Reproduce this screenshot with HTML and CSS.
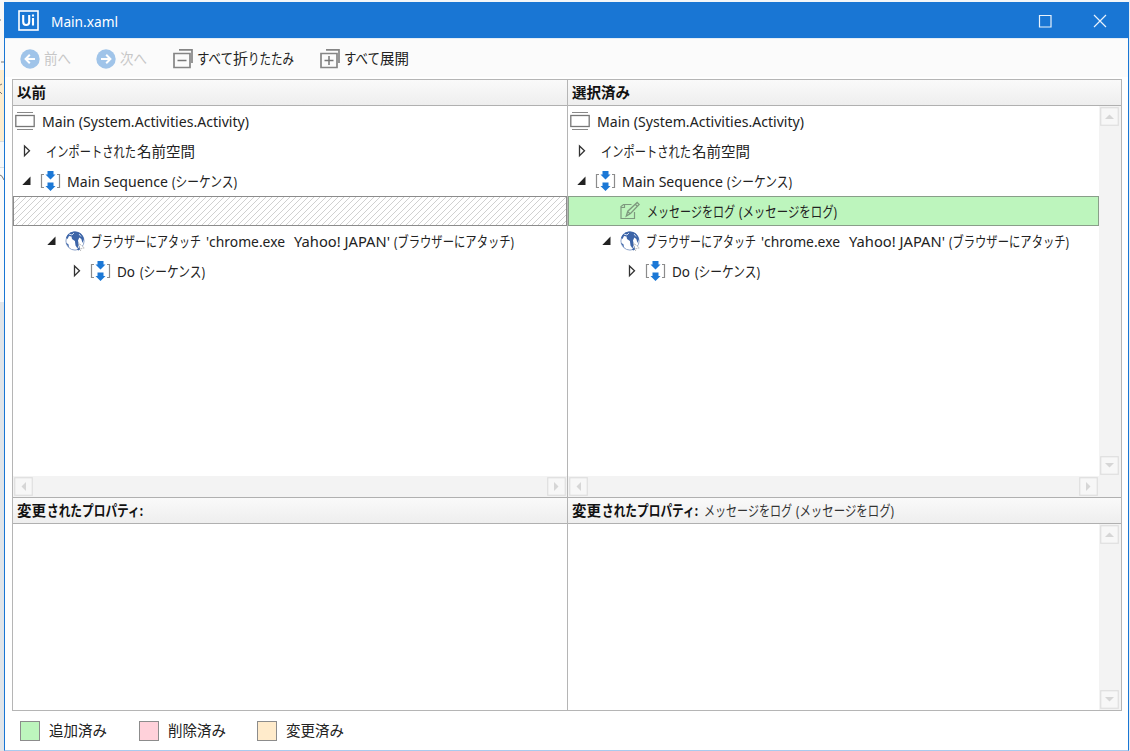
FILE: index.html
```html
<!DOCTYPE html>
<html lang="ja">
<head>
<meta charset="utf-8">
<title>Main.xaml</title>
<link rel="stylesheet" href="styles.css">
</head>
<body>
<svg class="defs" width="0" height="0">
  <defs>
    <symbol id="back" viewBox="0 0 20 20"><circle cx="10" cy="10" r="9.7" fill="#a0c4e9"/><path d="M15 10H6M9.8 5.8L5.6 10l4.2 4.2" fill="none" stroke="#fff" stroke-width="2"/></symbol>
    <symbol id="stack" viewBox="0 0 20 20"><path d="M1 4.500h16v14H1zM6 .8h13v13.200" fill="none" stroke="#858585" stroke-width="1.700"/><path d="M4.500 11.500h9" stroke="#777" stroke-width="1.500"/></symbol>
    <symbol id="activity" viewBox="0 0 20 20"><path d="M2 1.500h16M2 18.500h16" stroke="#888" stroke-width="1.200"/><rect x=".8" y="4.500" width="18.400" height="11" fill="#fff" stroke="#777" stroke-width="1.300"/></symbol>
    <symbol id="closed" viewBox="0 0 10 14"><path d="M2.500 2l5 4.800-5 4.800z" fill="#fff" stroke="#333" stroke-width="1.300"/></symbol>
    <symbol id="open" viewBox="0 0 10 10"><path d="M8.500 .5v8.500H.3z" fill="#222"/></symbol>
    <symbol id="sequence" viewBox="0 0 22 20"><path d="M4 3.500H1.500v13H4M17 3.500h2.500v13H17" fill="none" stroke="#8c8c8c" stroke-width="1.200"/><path d="M7.500 0h6v3.500h2L10.500 8.500 5.500 3.500h2zM7.500 11.500h6V15h2l-5 5-5-5h2z" fill="#1c78d6"/></symbol>
    <symbol id="globe" viewBox="0 0 20 20"><circle cx="10" cy="10" r="9.100" fill="#fff" stroke="#8fa5cb" stroke-width="1"/><path d="M1 7C2.500 2.500 6 .5 10 .5c4.500 0 8.200 3 9 7.500l-1.500 4-1.200-4-2-1.500-1.300 3 .8 4.500-1.300 3.500-2-3-.6-4.500L7 8 6.500 5.500 4 5 2.500 8zM12 18.500l2.500-3 1 2.500-2 1.500zM.8 12l2.500 1 1 4z" fill="#3d65a8"/><path d="M4 3l3 1 2-2M14 3l2 2.500" fill="none" stroke="#cfdcef" stroke-width="1"/><path d="M13.500 12l6 5-2.800.2-1.200 2.400z" fill="#fff" stroke="#a5a5a5" stroke-width=".8" stroke-dasharray="1.300 .8"/></symbol>
    <symbol id="note" viewBox="0 0 20 20"><path d="M14.500 11v6.500H1V5.500L3.500 3.500h8M1 6.500h3.500v-3" fill="none" stroke="#7e987e" stroke-width="1.200"/><path d="M17.200 1.500l2 2L10.500 12.500l-4.200 2.500 1.500-4.800zM8 11l2.200 1.800M15.500 3.500l2 2" fill="none" stroke="#7e987e" stroke-width="1.300"/></symbol>
    <symbol id="up" viewBox="0 0 19 19"><rect x=".75" y=".75" width="17.500" height="17.500" fill="#f7f7f7" stroke="#dedede" stroke-width="1.200"/><path d="M5 12l4.500-4.500L14 12z" fill="#d6d6d6"/></symbol>
    <pattern id="hatch" width="6" height="6" patternUnits="userSpaceOnUse"><path d="M-1 7L7-1M-1 1l2-2M5 7l2-2" stroke="#c4c4c4" stroke-width=".8"/></pattern>
  </defs>
</svg>
<div class="desktop">
  <div class="behind">
    <span class="strip strip-top"></span><span class="strip strip-cream"></span><span class="strip strip-gap"></span><span class="strip strip-mid"></span><span class="strip strip-low"></span>
    <svg class="scraps" width="5" height="751"><path d="M0 20h1M1 62h3M0 85l2-1M0 92l2 2M0 175q2 0 4 5" fill="none" stroke="#777"/><path d="M0 141.500h5M0 167.500h5" stroke="#d6dde2"/></svg>
  </div>
  <div class="window">
    <header class="titlebar">
      <svg class="logo" width="21" height="21"><rect x="1" y="1" width="19" height="19" fill="none" stroke="#fff" stroke-width="1.600"/><path d="M5.200 5v6.700q0 3.300 3 3.300t3-3.300V5M15 8v7.500M15 4.500v2" fill="none" stroke="#fff" stroke-width="2.100"/></svg>
      <svg class="title" width="69" height="22"><text x="0" y="17" textLength="67" lengthAdjust="spacingAndGlyphs">Main.xaml</text></svg>
      <svg class="controls" width="72" height="14"><path d="M1.500 1.500h11.500v11.500H1.500zM56 1l12 12M68 1L56 13" fill="none" stroke="#e8f2fc" stroke-width="1.200"/></svg>
    </header>
    <nav class="toolbar">
      <div class="tool off prev"><svg width="20" height="20"><use href="#back"/></svg><svg class="text" width="28" height="22"><text y="16" textLength="27" lengthAdjust="spacingAndGlyphs">前へ</text></svg></div>
      <div class="tool off next"><svg class="flip" width="20" height="20"><use href="#back"/></svg><svg class="text" width="28" height="22"><text y="16" textLength="27" lengthAdjust="spacingAndGlyphs">次へ</text></svg></div>
      <div class="tool collapse"><svg width="20" height="20"><use href="#stack"/></svg><svg class="text" width="99" height="22"><text y="16"><tspan x="0" textLength="36" lengthAdjust="spacingAndGlyphs">すべて</tspan><tspan x="36" textLength="15" lengthAdjust="spacingAndGlyphs">折</tspan><tspan x="51" textLength="46" lengthAdjust="spacingAndGlyphs">りたたみ</tspan></text></svg></div>
      <div class="tool"><svg width="20" height="20"><use href="#stack"/><path d="M9 7v9" stroke="#777" stroke-width="1.500"/></svg><svg class="text" width="67" height="22"><text y="16"><tspan x="0" textLength="36" lengthAdjust="spacingAndGlyphs">すべて</tspan><tspan x="36" textLength="29" lengthAdjust="spacingAndGlyphs">展開</tspan></text></svg></div>
    </nav>
    <main class="grid">
      <section class="pane">
        <h2 class="head"><svg class="text" width="60" height="22"><text y="16" textLength="29" lengthAdjust="spacingAndGlyphs">以前</text></svg></h2>
        <div class="tree">
          <div class="row"><svg class="root-icon" width="20" height="20"><use href="#activity"/></svg><svg class="text" width="210" height="22"><text y="16" textLength="207" lengthAdjust="spacingAndGlyphs">Main (System.Activities.Activity)</text></svg></div>
          <div class="row l1"><svg class="arrow" width="10" height="14"><use href="#closed"/></svg><svg class="text names" width="151" height="22"><text y="16"><tspan x="0" textLength="90" lengthAdjust="spacingAndGlyphs">インポートされた</tspan><tspan x="91" textLength="58" lengthAdjust="spacingAndGlyphs">名前空間</tspan></text></svg></div>
          <div class="row l1"><svg class="arrow" width="10" height="10"><use href="#open"/></svg><svg class="seq" width="22" height="20"><use href="#sequence"/></svg><svg class="text" width="173" height="22"><text y="16"><tspan x="0" textLength="101" lengthAdjust="spacingAndGlyphs">Main Sequence</tspan><tspan x="105" textLength="65" lengthAdjust="spacingAndGlyphs">(シーケンス)</tspan></text></svg></div>
          <div class="row missing"><svg width="552" height="28"><rect width="552" height="28" fill="url(#hatch)"/></svg></div>
          <div class="row l2"><svg class="arrow" width="10" height="10"><use href="#open"/></svg><svg class="globe" width="20" height="20"><use href="#globe"/></svg><svg class="text" width="425" height="22"><text y="16"><tspan x="0" textLength="110" lengthAdjust="spacingAndGlyphs">ブラウザーにアタッチ</tspan><tspan x="115" textLength="79" lengthAdjust="spacingAndGlyphs">'chrome.exe</tspan><tspan x="203" textLength="96" lengthAdjust="spacingAndGlyphs">Yahoo! JAPAN'</tspan><tspan x="303" textLength="120" lengthAdjust="spacingAndGlyphs">(ブラウザーにアタッチ)</tspan></text></svg></div>
          <div class="row l3"><svg class="arrow" width="10" height="14"><use href="#closed"/></svg><svg class="seq" width="22" height="20"><use href="#sequence"/></svg><svg class="text" width="91" height="22"><text y="16"><tspan x="0" textLength="18" lengthAdjust="spacingAndGlyphs">Do</tspan><tspan x="23" textLength="65" lengthAdjust="spacingAndGlyphs">(シーケンス)</tspan></text></svg></div>
        </div>
        <div class="hscroll"><svg class="turn-left" width="19" height="19"><use href="#up"/></svg><svg class="turn-right" width="19" height="19"><use href="#up"/></svg></div>
        <h2 class="head props"><svg class="text" width="140" height="22"><text y="16"><tspan x="0" textLength="29" lengthAdjust="spacingAndGlyphs">変更</tspan><tspan x="30" textLength="96" lengthAdjust="spacingAndGlyphs">されたプロパティ:</tspan></text></svg></h2>
        <div class="details"></div>
      </section>
      <section class="pane selected">
        <h2 class="head"><svg class="text" width="60" height="22"><text y="16" textLength="58" lengthAdjust="spacingAndGlyphs">選択済み</text></svg></h2>
        <div class="body">
          <div class="main-column">
            <div class="tree">
              <div class="row"><svg class="root-icon" width="20" height="20"><use href="#activity"/></svg><svg class="text" width="210" height="22"><text y="16" textLength="207" lengthAdjust="spacingAndGlyphs">Main (System.Activities.Activity)</text></svg></div>
              <div class="row l1"><svg class="arrow" width="10" height="14"><use href="#closed"/></svg><svg class="text names" width="151" height="22"><text y="16"><tspan x="0" textLength="90" lengthAdjust="spacingAndGlyphs">インポートされた</tspan><tspan x="91" textLength="58" lengthAdjust="spacingAndGlyphs">名前空間</tspan></text></svg></div>
              <div class="row l1"><svg class="arrow" width="10" height="10"><use href="#open"/></svg><svg class="seq" width="22" height="20"><use href="#sequence"/></svg><svg class="text" width="173" height="22"><text y="16"><tspan x="0" textLength="101" lengthAdjust="spacingAndGlyphs">Main Sequence</tspan><tspan x="105" textLength="65" lengthAdjust="spacingAndGlyphs">(シーケンス)</tspan></text></svg></div>
              <div class="row added"><svg class="note" width="20" height="20"><use href="#note"/></svg><svg class="text" width="193" height="22"><text y="16"><tspan x="0" textLength="88" lengthAdjust="spacingAndGlyphs">メッセージをログ</tspan><tspan x="92" textLength="98" lengthAdjust="spacingAndGlyphs">(メッセージをログ)</tspan></text></svg></div>
              <div class="row l2"><svg class="arrow" width="10" height="10"><use href="#open"/></svg><svg class="globe" width="20" height="20"><use href="#globe"/></svg><svg class="text" width="425" height="22"><text y="16"><tspan x="0" textLength="110" lengthAdjust="spacingAndGlyphs">ブラウザーにアタッチ</tspan><tspan x="115" textLength="79" lengthAdjust="spacingAndGlyphs">'chrome.exe</tspan><tspan x="203" textLength="96" lengthAdjust="spacingAndGlyphs">Yahoo! JAPAN'</tspan><tspan x="303" textLength="120" lengthAdjust="spacingAndGlyphs">(ブラウザーにアタッチ)</tspan></text></svg></div>
              <div class="row l3"><svg class="arrow" width="10" height="14"><use href="#closed"/></svg><svg class="seq" width="22" height="20"><use href="#sequence"/></svg><svg class="text" width="91" height="22"><text y="16"><tspan x="0" textLength="18" lengthAdjust="spacingAndGlyphs">Do</tspan><tspan x="23" textLength="65" lengthAdjust="spacingAndGlyphs">(シーケンス)</tspan></text></svg></div>
            </div>
            <div class="hscroll"><svg class="turn-left" width="19" height="19"><use href="#up"/></svg><svg class="turn-right" width="19" height="19"><use href="#up"/></svg></div>
          </div>
          <div class="vscroll upper"><svg width="19" height="19"><use href="#up"/></svg><svg class="turn-down" width="19" height="19"><use href="#up"/></svg></div>
        </div>
        <h2 class="head props"><svg class="text" width="330" height="22"><text y="16"><tspan x="0" textLength="29" lengthAdjust="spacingAndGlyphs">変更</tspan><tspan x="30" textLength="96" lengthAdjust="spacingAndGlyphs">されたプロパティ:</tspan><tspan class="light" x="132" textLength="88" lengthAdjust="spacingAndGlyphs">メッセージをログ</tspan><tspan class="light" x="224" textLength="98" lengthAdjust="spacingAndGlyphs">(メッセージをログ)</tspan></text></svg></h2>
        <div class="details"><div class="vscroll"><svg width="19" height="19"><use href="#up"/></svg><svg class="turn-down" width="19" height="19"><use href="#up"/></svg></div></div>
      </section>
    </main>
    <footer class="legend">
      <div class="key"><i class="swatch green"></i><svg class="text" width="60" height="22"><text y="16" textLength="58" lengthAdjust="spacingAndGlyphs">追加済み</text></svg></div>
      <div class="key"><i class="swatch pink"></i><svg class="text" width="60" height="22"><text y="16" textLength="58" lengthAdjust="spacingAndGlyphs">削除済み</text></svg></div>
      <div class="key"><i class="swatch cream"></i><svg class="text" width="60" height="22"><text y="16" textLength="58" lengthAdjust="spacingAndGlyphs">変更済み</text></svg></div>
    </footer>
  </div>
  <div class="edge"></div>
</div>
</body>
</html>
```

FILE: styles.css
```css
* { box-sizing: border-box; }
body { margin: 0; width: 1130px; height: 751px; overflow: hidden; background: #fff; }
svg { display: block; flex: none; overflow: visible; }
.defs { position: absolute; }
.desktop { display: flex; height: 751px; background: #f3f6f8; }
.behind { position: relative; display: flex; flex-direction: column; width: 4px; flex: none; overflow: hidden; }
.strip { display: block; flex: none; }
.strip-top { height: 70px; background: #f8f8f8; }
.strip-cream { height: 71px; background: #fdedd0; }
.strip-gap { height: 27px; background: #f6f8f9; }
.strip-mid { height: 134px; background: #fafafa; }
.strip-low { flex: 1; background: #e1e5e9; }
.scraps { position: absolute; left: 0; top: 0; }
.window { display: flex; flex-direction: column; width: 1125px; height: 749px; margin-top: 2px; background: #fff; border: 1px solid #1976d4; border-top: 0; border-bottom-color: #a9cbee; }
.edge { width: 1px; background: #e8eef4; }
.titlebar { display: flex; align-items: center; height: 36px; flex: none; padding: 1px 18px 0 13px; background: #1976d4; }
.title { margin-left: 12px; font: 14.5px "Noto Sans", sans-serif; fill: #fff; }
.controls { margin-left: auto; }
.toolbar { display: flex; align-items: center; height: 39px; flex: none; padding: 2px 0 0 15px; background: #fbfbfb; border-top: 1px solid #e4eef7; }
.tool { display: flex; align-items: center; gap: 4px; }
.prev, .next { margin-right: 29px; }
.next { margin-right: 30px; }
.prev .text, .next .text { margin-right: -5px; }
.collapse { margin-right: 24px; }
.flip { transform: scaleX(-1); }
.text { font: 14.5px "Noto Sans", "Noto Sans CJK JP", sans-serif; fill: currentColor; }
.tool, .tree, .head, .legend { color: #222; }
.tool.off { color: #c7c7c7; }
.grid { display: grid; grid-template-columns: 554px 554px; height: 632px; flex: none; margin: 2px 7px 0; border: 1px solid #b5b5b5; width: 1110px; }
.pane { display: flex; flex-direction: column; min-width: 0; }
.selected { border-left: 1px solid #b5b5b5; }
.head { display: flex; align-items: center; height: 26px; flex: none; margin: 0; padding: 0 0 0 4px; background: linear-gradient(#fafafa, #eee); border-bottom: 1px solid #b0b0b0; color: #111; }
.head .text { font-weight: 700; }
.head .light { font-weight: 400; fill: #333; }
.props { height: 27px; border-top: 1px solid #b0b0b0; padding-top: 1px; }
.body { display: flex; height: 391px; flex: none; }
.main-column { flex: 1; min-width: 0; }
.tree { height: 370px; flex: none; }
.row { display: flex; align-items: center; height: 30px; padding-left: 2px; }
.row .text { margin-top: 2px; }
.root-icon { margin-right: 7px; }
.l1 { padding-left: 9px; }
.l2 { padding-left: 34px; }
.l3 { padding-left: 59px; }
.names { margin-left: 14px; }
.seq { margin: 0 5px 0 8px; }
.globe { margin: 0 6px 0 8px; }
.missing { border: 1px solid #8c8c8c; padding: 0; overflow: hidden; }
.added { padding-left: 51px; border: 1px solid #899e89; background: #bdf5bd; }
.note { margin-right: 7px; }
.hscroll { display: flex; justify-content: space-between; height: 21px; flex: none; padding: 1px; background: #f3f3f3; }
.vscroll { display: flex; flex-direction: column; justify-content: space-between; width: 22px; flex: none; padding: 1px; background: #f3f3f3; }
.upper { padding-bottom: 22px; }
.turn-left { transform: rotate(-90deg); }
.turn-right { transform: rotate(90deg); }
.turn-down { transform: rotate(180deg); }
.details { display: flex; justify-content: flex-end; flex: 1; }
.legend { display: flex; align-items: center; gap: 30px; flex: 1; padding-left: 15px; }
.key { display: flex; align-items: center; gap: 9px; width: 88.5px; }
.swatch { width: 20px; height: 20px; flex: none; border: 1px solid #8c8c8c; }
.green { background: #bdf5bd; }
.pink { background: #ffd1da; }
.cream { background: #ffebcb; }
```
